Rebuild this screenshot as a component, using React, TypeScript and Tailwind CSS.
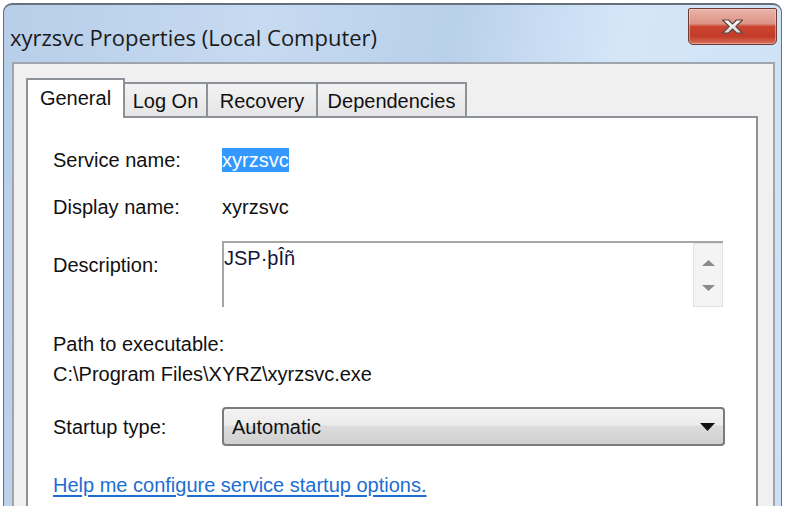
import { ReactNode } from "react";

type Tab = {
  label: string;
  width: string;
  active?: boolean;
};

const tabs: Tab[] = [
  { label: "General", width: "w-[99px]", active: true },
  { label: "Log On", width: "w-[83px]" },
  { label: "Recovery", width: "w-[110px]" },
  { label: "Dependencies", width: "w-[149px]" },
];

function CloseGlyph() {
  return (
    <svg width="23" height="15" viewBox="0 0 23 15">
      <defs>
        <linearGradient id="xfill" x1="0" y1="0" x2="0" y2="1">
          <stop offset="0" stopColor="#ffffff" />
          <stop offset="1" stopColor="#d6d6d6" />
        </linearGradient>
      </defs>
      <path
        d="M1.5 1 H7.5 L11.5 5 L15.5 1 H21.5 L14.8 7.5 L21.5 14 H15.5 L11.5 10 L7.5 14 H1.5 L8.2 7.5 Z"
        fill="url(#xfill)"
        stroke="#5c4440"
        strokeWidth="1.1"
        strokeLinejoin="round"
      />
    </svg>
  );
}

function Row({ label, children, className = "" }: { label: string; children: ReactNode; className?: string }) {
  return (
    <div className={`flex items-center ${className}`}>
      <div className="w-[169px] shrink-0">{label}</div>
      {children}
    </div>
  );
}

export default function App() {
  return (
    <div className="w-[786px] h-[506px] overflow-hidden bg-white pt-[3px] pl-[3px] pr-[4px] font-['Liberation_Sans',Arial,sans-serif] text-[20px] leading-[24px] text-[#111]">
      {/* window frame */}
      <div className="h-[520px] flex flex-col rounded-t-[9px] border-t-2 border-x border-[#66707c] bg-[linear-gradient(100deg,#b7cee9_0%,#c6daf1_30%,#b9d0eb_52%,#d5e6f8_72%,#cde0f5_100%)] pl-[8px] pr-[6px]">
        {/* title bar */}
        <div className="h-[57px] flex items-start">
          <div className="mt-[18px] -ml-[2px] leading-[28px] text-[22px] text-[#1b1b1b] font-['Open_Sans','Noto_Sans',sans-serif]">
            xyrzsvc Properties (Local Computer)
          </div>
          <div className="ml-auto -mr-[2px] mt-[3px] w-[89px] h-[37px] rounded-b-[5px] rounded-t-[2px] border border-[#6e3b34] shadow-[inset_0_0_0_1px_rgba(255,220,210,0.45)] bg-[linear-gradient(to_bottom,#e9b4a9_0%,#dc9385_42%,#cb4631_50%,#c33b26_78%,#d8705c_100%)] flex items-center justify-center">
            <CloseGlyph />
          </div>
        </div>

        {/* client area */}
        <div className="flex-1 flex flex-col bg-[#f0f0f0] border-2 border-[#9ea5ad] pt-[14px] pl-[12px] pr-[15px]">
          <div className="flex items-end h-[40px]">
            {tabs.map((t) =>
              t.active ? (
                <div
                  key={t.label}
                  className={`${t.width} h-[40px] relative z-10 bg-white border-2 border-b-0 border-[#8d929a] flex items-center justify-center pb-[3px]`}
                >
                  {t.label}
                </div>
              ) : (
                <div
                  key={t.label}
                  className={`${t.width} h-[36px] bg-[linear-gradient(to_bottom,#f3f3f3,#e4e4e4)] border-2 border-l-0 border-b-0 border-[#8d929a] flex items-center justify-center pb-[1px]`}
                >
                  {t.label}
                </div>
              )
            )}
          </div>

          {/* General page */}
          <div className="relative flex-1 -mt-[2px] bg-white border-2 border-b-0 border-[#8d929a] pl-[25px] pt-[30px]">
            <Row label="Service name:">
              <span className="bg-[#3399ff] text-white">xyrzsvc</span>
            </Row>
            <Row label="Display name:" className="mt-[23px]">
              <span>xyrzsvc</span>
            </Row>

            <div className="flex items-start mt-[22px]">
              <div className="w-[169px] shrink-0 mt-[12px]">Description:</div>
              <div className="w-[501px] h-[66px] flex border-t-2 border-l-2 border-[#a6a6a6]">
                <div className="flex-1 pt-[3px] text-[#14143a]">JSP·þÎñ</div>
                <div className="w-[30px] h-full bg-[#f4f4f4] border border-[#e3e3e3] flex flex-col items-center justify-around py-[6px]">
                  <svg width="13" height="6" viewBox="0 0 13 6">
                    <path d="M6.5 0 L13 6 H0 Z" fill="#8a8a8a" />
                  </svg>
                  <svg width="13" height="6" viewBox="0 0 13 6">
                    <path d="M0 0 H13 L6.5 6 Z" fill="#8a8a8a" />
                  </svg>
                </div>
              </div>
            </div>

            <div className="mt-[22px] leading-[30px]">
              <div>Path to executable:</div>
              <div>C:\Program Files\XYRZ\xyrzsvc.exe</div>
            </div>

            <Row label="Startup type:" className="mt-[18px]">
              <div className="w-[503px] h-[39px] rounded-[4px] border-2 border-[#7b7b7b] bg-[linear-gradient(to_bottom,#f3f3f3_0%,#ececec_45%,#dcdcdc_50%,#d0d0d0_100%)] flex items-center pl-[8px] pr-[8px]">
                <span className="flex-1">Automatic</span>
                <svg width="15" height="8" viewBox="0 0 15 8">
                  <path d="M0 0 H15 L7.5 8 Z" fill="#111" />
                </svg>
              </div>
            </Row>

            <div className="mt-[27px]">
              <a className="text-[#1c6ed3] underline underline-offset-[3px] cursor-pointer">
                Help me configure service startup options.
              </a>
            </div>
          </div>
        </div>
      </div>
    </div>
  );
}
